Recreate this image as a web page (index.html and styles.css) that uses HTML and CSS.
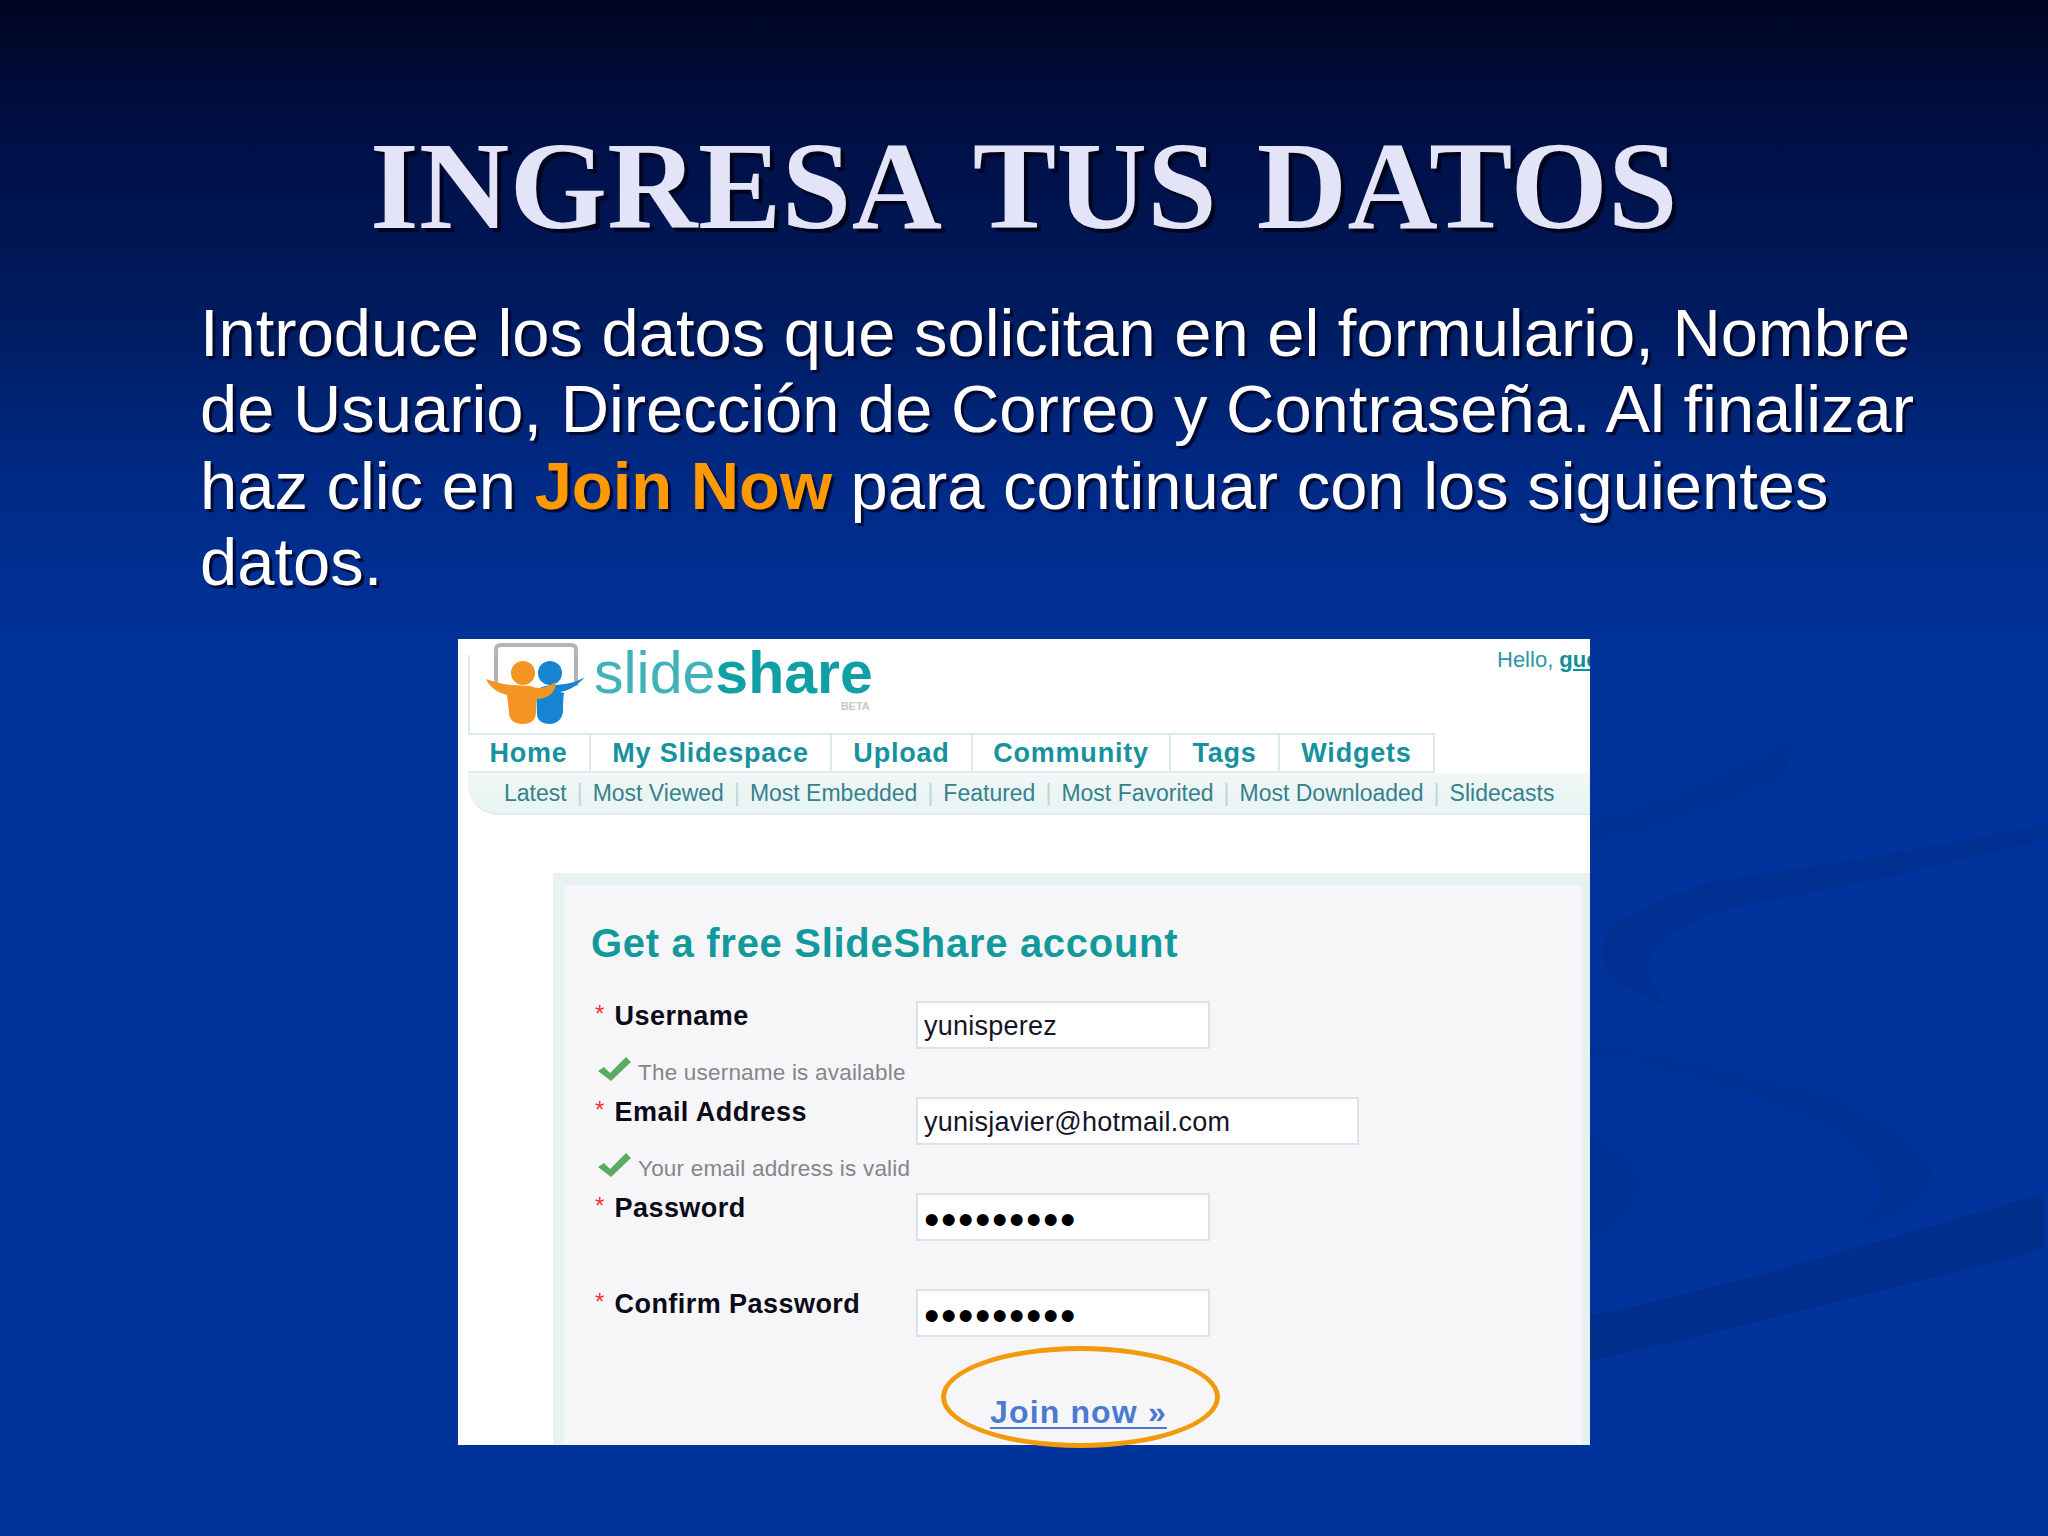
FILE: index.html
```html
<!DOCTYPE html>
<html lang="es">
<head>
<meta charset="utf-8">
<title>Ingresa tus datos</title>
<link rel="stylesheet" href="styles.css">
</head>
<body>
<main class="slide">
  <svg class="swoosh" viewBox="0 0 2048 1536" aria-hidden="true">
    <path class="s-band" d="M1590 1316 C1750 1282 1900 1235 2044 1193 L2044 1249 C1900 1285 1750 1325 1590 1361Z"/>
    <path class="s-soft" d="M1590 823 C1660 805 1730 770 1797 737 C1790 755 1785 770 1780 780 C1720 805 1650 830 1590 844Z"/>
    <path class="s-mid" d="M2048 823 C1950 845 1830 865 1745 876 C1690 885 1640 905 1615 925 C1595 945 1598 965 1622 983 C1640 995 1655 1003 1671 1008 C1660 995 1650 985 1647 972 C1648 955 1655 945 1668 935 C1690 920 1720 912 1745 905 C1820 892 1950 865 2048 838Z"/>
    <path class="s-soft" d="M1590 1046 C1650 1050 1700 1065 1745 1076 C1790 1085 1830 1095 1850 1105 C1890 1122 1915 1140 1925 1158 C1935 1172 1932 1185 1919 1201 C1895 1218 1865 1228 1839 1233 C1860 1222 1875 1210 1879 1196 C1882 1185 1878 1175 1870 1164 C1855 1145 1835 1130 1815 1121 C1770 1100 1720 1085 1675 1073 C1650 1065 1620 1058 1590 1055Z"/>
    <path class="s-soft" d="M1590 1132 C1615 1145 1640 1165 1640 1183 C1638 1205 1615 1228 1590 1241Z"/>
  </svg>

  <h1 class="title">INGRESA TUS DATOS</h1>
  <p class="intro">Introduce los datos que solicitan en el formulario, Nombre de Usuario, Dirección de Correo y Contraseña. Al finalizar haz clic en <strong class="hl">Join Now</strong> para continuar con los siguientes datos.</p>

  <div class="shot-wrap">
    <section class="shot">
      <header class="brand">
        <svg class="logo" viewBox="0 0 110 90" aria-hidden="true">
          <path class="logo-board" d="M16 46 V10 Q16 5 21 5 H91 Q96 5 96 10 V46"/>
          <path class="logo-blue" d="M105 37 C96 47 87 51 80 52 L84 53 C83 60 83 66 83 72 C82 80 76 84 70 84 C62 84 57 80 57 74 L56 50 C62 46 66 46 72 45 C84 45 95 43 105 37Z"/>
          <circle class="logo-blue" cx="70" cy="33" r="12"/>
          <path class="logo-orange" d="M6 39 C18 43 27 45 33 45 L50 46 C58 49 67 49 75 42 C77 50 70 59 56 59 L56 72 C56 80 51 84 43 84 C34 84 29 80 29 72 L27 55 C19 53 10 48 6 39Z"/>
          <circle class="logo-orange" cx="43" cy="33" r="12"/>
        </svg>
        <div class="wordmark">slide<b>share</b><span class="beta">BETA</span></div>
        <div class="hello">Hello, <a class="hello-link">guest</a></div>
      </header>

      <nav class="tabs">
        <a class="tab tab-home">Home</a>
        <a class="tab tab-space">My Slidespace</a>
        <a class="tab tab-upload">Upload</a>
        <a class="tab tab-community">Community</a>
        <a class="tab tab-tags">Tags</a>
        <a class="tab tab-widgets">Widgets</a>
      </nav>

      <nav class="subnav">
        <a>Latest</a><i>|</i><a>Most Viewed</a><i>|</i><a>Most Embedded</a><i>|</i><a>Featured</a><i>|</i><a>Most Favorited</a><i>|</i><a>Most Downloaded</a><i>|</i><a>Slidecasts</a>
      </nav>

      <div class="panel">
        <h2 class="panel-title">Get a free SlideShare account</h2>

        <div class="row">
          <div class="label-col">
            <div class="label"><span class="star">*</span>Username</div>
            <div class="hint">
              <svg class="check" viewBox="0 0 33 24" aria-hidden="true"><path d="M0 14 L6 10 L12 16 L28 0 L33 5 L13 24Z"/></svg>
              <span class="hint-text">The username is available</span>
            </div>
          </div>
          <div class="field">yunisperez</div>
        </div>

        <div class="row">
          <div class="label-col">
            <div class="label"><span class="star">*</span>Email Address</div>
            <div class="hint">
              <svg class="check" viewBox="0 0 33 24" aria-hidden="true"><path d="M0 14 L6 10 L12 16 L28 0 L33 5 L13 24Z"/></svg>
              <span class="hint-text">Your email address is valid</span>
            </div>
          </div>
          <div class="field field-wide">yunisjavier@hotmail.com</div>
        </div>

        <div class="row">
          <div class="label-col">
            <div class="label"><span class="star">*</span>Password</div>
          </div>
          <div class="field field-pass">•••••••••</div>
        </div>

        <div class="row">
          <div class="label-col">
            <div class="label"><span class="star">*</span>Confirm Password</div>
          </div>
          <div class="field field-pass">•••••••••</div>
        </div>

        <a class="join">Join now »</a>
      </div>
    </section>
    <div class="ring"></div>
  </div>
</main>
</body>
</html>
```
FILE: styles.css
```css
* { box-sizing: border-box; }
html, body { margin: 0; padding: 0; }
body { background: #00339c; }

.slide {
  position: relative;
  width: 2048px;
  height: 1536px;
  overflow: hidden;
  padding-top: 116px;
  background: linear-gradient(180deg, #000621 0, #000f45 130px, #001a5c 300px, #002a85 480px, #00339c 660px, #00339c 100%);
  font-family: "Liberation Sans", Arial, sans-serif;
}

.swoosh { position: absolute; left: 0; top: 0; width: 2048px; height: 1536px; }
.s-band { fill: #002e8c; }
.s-mid { fill: #003092; }
.s-soft { fill: #003195; }

.title {
  position: relative;
  margin: 0;
  height: 140px;
  line-height: 140px;
  text-align: center;
  font-family: "Liberation Serif", "Times New Roman", serif;
  font-size: 125px;
  font-weight: 700;
  letter-spacing: .4px;
  word-spacing: 8px;
  color: #e4e4f8;
  text-shadow: 4px 4px 1px #00051c;
  white-space: nowrap;
}

.intro {
  position: relative;
  margin: 38.5px 0 0 200px;
  width: 1760px;
  font-size: 66.9px;
  line-height: 76.5px;
  color: #fff;
  text-shadow: 3px 3px 1px rgba(0, 5, 35, .85);
}
.hl { color: #ff9900; font-weight: 700; }

.shot-wrap {
  position: relative;
  width: 1132px;
  height: 806px;
  margin: 38.5px 0 0 458px;
}
.shot {
  display: flex;
  flex-direction: column;
  width: 100%;
  height: 100%;
  overflow: hidden;
  background: #fff;
}

/* header */
.brand {
  position: relative;
  display: flex;
  flex: none;
  height: 94px;
  margin-left: 10px;
  padding-left: 2px;
  background: linear-gradient(#dcebeb, #dcebeb) no-repeat 0 16px / 2px 100%;
}
.logo { flex: none; width: 110px; height: 90px; margin: 1px 0 0 10px; }
.logo-board { fill: none; stroke: #b4b4b4; stroke-width: 4; }
.logo-orange { fill: #f39423; }
.logo-blue { fill: #1684d0; }

.wordmark {
  position: relative;
  margin: 4px 0 0 4px;
  height: 60px;
  line-height: 60px;
  font-size: 59px;
  color: #3fb3b8;
  white-space: nowrap;
  font-weight: 400;
}
.wordmark b { font-weight: 700; color: #0f9fa5; }
.beta {
  position: absolute;
  right: 3px;
  top: 57px;
  font-size: 11px;
  line-height: 13px;
  color: #c9c9c9;
  font-weight: 700;
}
.hello {
  margin-left: auto;
  margin-right: -57px;
  padding-top: 8px;
  width: 150px;
  font-size: 22px;
  line-height: 26px;
  color: #2b97a8;
  white-space: nowrap;
}
.hello-link { color: #0d8f95; font-weight: 700; text-decoration: underline; }

/* tabs */
.tabs {
  display: flex;
  flex: none;
  width: 967px;
  height: 40px;
  margin-left: 10px;
  border: 2px solid #dcebeb;
  border-left: 0;
}
.tab {
  display: flex;
  align-items: center;
  justify-content: center;
  border-right: 2px solid #dcebeb;
  font-size: 27px;
  font-weight: 700;
  letter-spacing: .8px;
  color: #15929e;
  white-space: nowrap;
}
.tab-home { width: 123px; }
.tab-space { width: 241px; }
.tab-upload { width: 141px; }
.tab-community { width: 198px; }
.tab-tags { width: 109px; }
.tab-widgets { flex: 1; border-right: 0; }

.subnav {
  display: flex;
  align-items: center;
  flex: none;
  height: 42px;
  margin-left: 10px;
  padding: 0 0 0 36px;
  background: linear-gradient(180deg, #f2f7f7, #e9f5f2 60%, #eaf6f3);
  border-bottom: 2px solid #e3eded;
  border-bottom-left-radius: 30px;
  font-size: 23px;
  color: #38808e;
  white-space: nowrap;
}
.subnav i { margin: 0 10px; font-style: normal; color: #bcd7da; }

/* form panel */
.panel {
  flex: 1;
  margin: 58px 0 0 95px;
  padding: 35px 0 0 27px;
  background: #f6f6f8;
  border-top: 12px solid #e8f1f1;
  border-left: 11px solid #e8f3f3;
  border-right: 8px solid #e6f2f2;
}
.panel-title {
  margin: 0 0 35px;
  font-size: 40px;
  line-height: 46px;
  font-weight: 700;
  color: #12999c;
  letter-spacing: .7px;
  white-space: nowrap;
}
.row {
  display: grid;
  grid-template-columns: 325px 1fr;
  height: 96px;
}
.label-col { overflow: hidden; padding-left: 4px; }
.label {
  height: 26px;
  line-height: 26px;
  font-size: 27px;
  font-weight: 700;
  letter-spacing: .45px;
  color: #0b0b1a;
  white-space: nowrap;
}
.star {
  display: inline-block;
  width: 19.5px;
  color: #f0303c;
  font-weight: 400;
  font-size: 24px;
  vertical-align: 3px;
}
.hint { display: flex; margin: 28px 0 0 3px; height: 30px; align-items: flex-start; }
.check { flex: none; width: 33px; height: 24px; margin-top: 2px; fill: #5cab63; }
.hint-text {
  margin-left: 7px;
  padding-top: 6px;
  font-size: 22.5px;
  letter-spacing: .2px;
  line-height: 24px;
  color: #85858c;
  white-space: nowrap;
}
.field {
  width: 294px;
  height: 48px;
  padding-left: 6px;
  background: #fff;
  border: 2px solid #d8e4e6;
  font-size: 27px;
  letter-spacing: .25px;
  line-height: 46px;
  color: #14142a;
  white-space: nowrap;
}
.field-wide { width: 443px; }
.field-pass {
  font-size: 44px;
  letter-spacing: 1.6px;
  line-height: 50px;
  color: #000;
}

.join {
  display: inline-block;
  margin: 9px 0 0 399px;
  font-size: 32px;
  line-height: 36px;
  font-weight: 700;
  letter-spacing: 1.15px;
  color: #4a7bd0;
  text-decoration: underline;
  text-decoration-thickness: 2px;
  text-underline-offset: 4px;
  white-space: nowrap;
}

.ring {
  position: absolute;
  left: 483px;
  top: 707px;
  width: 279px;
  height: 102px;
  border: 5px solid #f39a0c;
  border-radius: 50%;
}
```
